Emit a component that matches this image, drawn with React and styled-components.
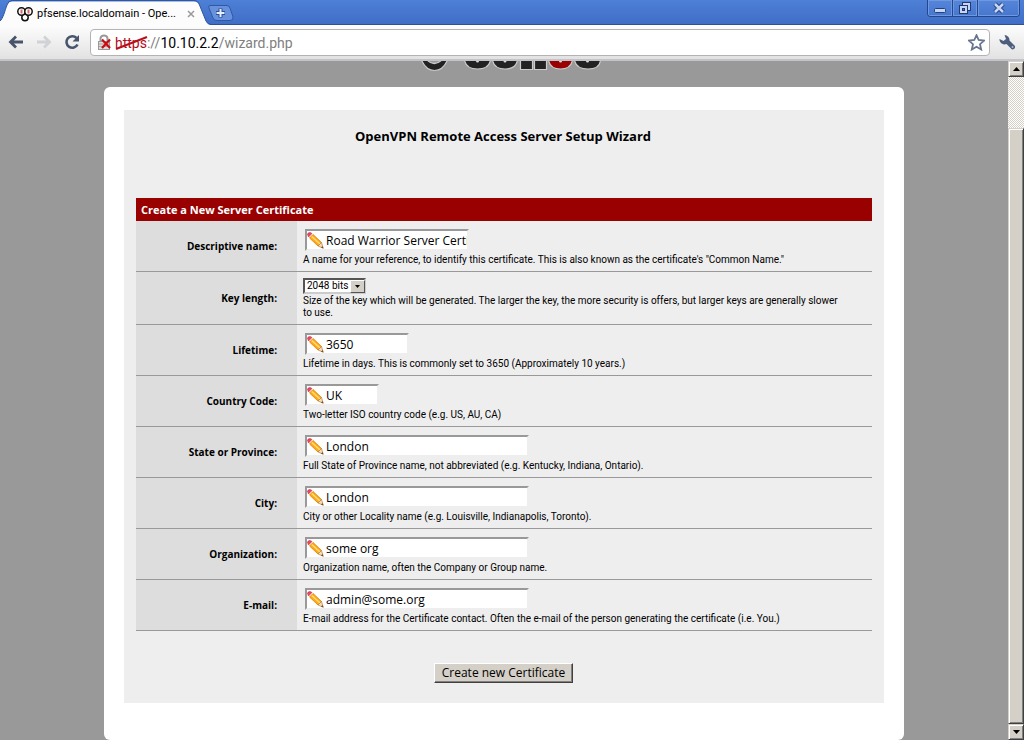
import React from "react";
import styled, { createGlobalStyle } from "styled-components";

const GlobalStyle = createGlobalStyle`
  * { box-sizing: border-box; }
  html, body, #root { height: 100%; }
  body {
    margin: 0;
    overflow: hidden;
    background: #999999;
    color: #000000;
    font-family: "Open Sans", "Noto Sans", sans-serif;
    font-size: 10px;
  }
  button, input, select { font-family: inherit; color: inherit; }
`;

const Browser = styled.div`
  display: flex;
  flex-direction: column;
  height: 100vh;
`;

const TabStrip = styled.header`
  display: flex;
  align-items: flex-start;
  height: 25px;
  background: linear-gradient(#4d80d6, #406ec6);
  border-bottom: 1px solid #2c4f96;
`;

const Tab = styled.div`
  position: relative;
  display: flex;
  align-items: center;
  gap: 4px;
  width: 212px;
  height: 25px;
  padding: 2px 17px 0 17px;
`;

const TabShape = styled.svg`
  position: absolute;
  left: 0;
  top: 0;
`;

const Favicon = styled.svg`
  position: relative;
  flex: none;
`;

const TabTitle = styled.span`
  position: relative;
  flex: 1;
  font-family: Roboto, sans-serif;
  font-size: 11px;
  line-height: 16px;
  white-space: nowrap;
`;

const PlainButton = styled.button`
  position: relative;
  display: flex;
  align-items: center;
  justify-content: center;
  flex: none;
  padding: 0;
  border: 0;
  background: none;
`;

const NewTab = styled(PlainButton)`
  margin: 5px 0 0 -4px;
`;

const WindowControls = styled.div`
  display: flex;
  height: 17px;
  margin: 0 4px 0 auto;
  border: 1px solid #24468c;
  border-top: 0;
  border-radius: 0 0 4px 4px;
  overflow: hidden;
`;

const WindowButton = styled(PlainButton)`
  width: ${(p) => (p.$wide ? "41px" : "25px")};
  background: linear-gradient(#5586da, #4777cd);
  border-right: ${(p) => (p.$wide ? "0" : "1px solid #24468c")};
  box-shadow: inset 0 0 0 1px #6f98e0;
`;

const Toolbar = styled.nav`
  display: flex;
  align-items: center;
  flex: none;
  height: 36px;
  padding: 0 8px;
  background: linear-gradient(#fdfdfd, #e2e2e2);
  border-bottom: 2px solid #c3c3cc;
`;

const NavButtons = styled.div`
  display: flex;
  gap: 12px;
  margin-right: 10px;
`;

const Omnibox = styled.div`
  display: flex;
  align-items: center;
  flex: 1;
  height: 27px;
  margin-right: 9px;
  padding: 0 4px 0 6px;
  background: #ffffff;
  border: 1px solid #b3b3b3;
  border-radius: 4px;
`;

const Address = styled.a`
  position: relative;
  flex: 1;
  margin-left: 3px;
  padding-top: 2px;
  font-family: Roboto, sans-serif;
  font-size: 14px;
  line-height: 20px;
  color: #808080;
  text-decoration: none;
`;

const Scheme = styled.span`
  color: #b00c1c;
`;

const Host = styled.span`
  color: #000000;
`;

const Strike = styled.svg`
  position: absolute;
  left: 0;
  top: 4px;
`;

const Viewport = styled.div`
  display: flex;
  flex: 1;
  min-height: 0;
`;

const Page = styled.main`
  flex: 1;
  min-width: 0;
  padding: 0 16px;
  overflow: hidden;
`;

const Logo = styled.svg`
  display: block;
  margin: 0 auto 14px;
`;

const Card = styled.section`
  max-width: 800px;
  margin: 0 auto;
  padding: 23px 20px 37px;
  background: #ffffff;
  border-radius: 6px;
`;

const WizardForm = styled.form`
  padding: 16px 12px 20px;
  background: #eeeeee;
`;

const Title = styled.h1`
  margin: 0 0 52px;
  padding-right: 2px;
  font-size: 13px;
  line-height: 20px;
  font-weight: 700;
  text-align: center;
`;

const SectionTitle = styled.h2`
  margin: 0;
  padding: 0 5px;
  background: #990000;
  color: #ffffff;
  font-size: 11px;
  line-height: 23px;
  font-weight: 700;
`;

const FieldRow = styled.div`
  display: grid;
  grid-template-columns: 161px 1fr;
  border-bottom: 1px solid #999999;
`;

const FieldLabel = styled.label`
  display: flex;
  align-items: center;
  justify-content: flex-end;
  padding-right: 20px;
  background: #dddddd;
  font-weight: 700;
`;

const FieldBody = styled.div`
  padding: ${(p) => (p.$compact ? "6px" : "8px")} 24px 5px 6px;
`;

const TextBox = styled.div`
  position: relative;
  width: ${(p) => p.$width}px;
  height: 22px;
  margin: 0 0 2px 2px;
`;

const TextInput = styled.input`
  width: 100%;
  height: 100%;
  padding: 0 0 0 19px;
  background: #ffffff;
  border: 2px solid;
  border-color: #999999 #eeeeee #eeeeee #999999;
  border-radius: 0;
  font-size: 12px;
  outline: 0;
`;

const Pencil = styled.svg`
  position: absolute;
  left: 2px;
  top: 3px;
`;

const SelectBox = styled.div`
  position: relative;
  width: 63px;
  height: 16px;
`;

const SelectInput = styled.select`
  display: block;
  width: 100%;
  height: 16px;
  padding: 0 0 0 2px;
  appearance: none;
  background: #ffffff;
  border: 2px solid;
  border-color: #555555 #cccccc #cccccc #555555;
  border-radius: 0;
  font-family: Roboto, sans-serif;
  font-size: 10px;
  line-height: 12px;
  outline: 0;
`;

const SelectArrow = styled.span`
  position: absolute;
  right: 1px;
  top: 2px;
  display: flex;
  align-items: center;
  justify-content: center;
  width: 15px;
  height: 13px;
  background: #d4d0c8;
  border: 1px solid;
  border-color: #ffffff #555555 #555555 #ffffff;
  pointer-events: none;
`;

const Hint = styled.p`
  margin: 0;
  padding-top: 1px;
  font-family: Roboto, sans-serif;
  line-height: 12px;
`;

const Actions = styled.div`
  display: flex;
  justify-content: center;
  padding-top: 32px;
`;

const Submit = styled.button`
  height: 20px;
  padding: 0 7px;
  margin-right: 1px;
  background: #d4d0c8;
  border: 1px solid;
  border-color: #ffffff #404040 #404040 #ffffff;
  border-radius: 0;
  box-shadow: inset -1px -1px #808080;
  font-size: 12px;
  line-height: 16px;
`;

const Scrollbar = styled.div`
  display: flex;
  flex-direction: column;
  flex: none;
  width: 16px;
  background: repeating-conic-gradient(#d4d0c8 0 25%, #ffffff 0 50%) 0 0 / 2px 2px;
`;

const ScrollButton = styled(PlainButton)`
  height: 16px;
  background: #d4d0c8;
  border: 1px solid;
  border-color: #d4d0c8 #404040 #404040 #d4d0c8;
  box-shadow: inset 1px 1px #ffffff, inset -1px -1px #808080;
`;

const Thumb = styled.div`
  flex: 1;
  margin-top: 51px;
  background: #d4d0c8;
  border: 1px solid;
  border-color: #d4d0c8 #404040 #404040 #d4d0c8;
  box-shadow: inset 1px 1px #ffffff, inset -1px -1px #808080;
`;

const FIELDS = [
  { id: "name", label: "Descriptive name:", value: "Road Warrior Server Certificate", width: 164,
    hint: 'A name for your reference, to identify this certificate. This is also known as the certificate\'s "Common Name."' },
  { id: "keylength", label: "Key length:", options: ["2048 bits", "1024 bits", "4096 bits"],
    hint: "Size of the key which will be generated. The larger the key, the more security is offers, but larger keys are generally slower to use." },
  { id: "lifetime", label: "Lifetime:", value: "3650", width: 104,
    hint: "Lifetime in days. This is commonly set to 3650 (Approximately 10 years.)" },
  { id: "country", label: "Country Code:", value: "UK", width: 74,
    hint: "Two-letter ISO country code (e.g. US, AU, CA)" },
  { id: "state", label: "State or Province:", value: "London", width: 224,
    hint: "Full State of Province name, not abbreviated (e.g. Kentucky, Indiana, Ontario)." },
  { id: "city", label: "City:", value: "London", width: 224,
    hint: "City or other Locality name (e.g. Louisville, Indianapolis, Toronto)." },
  { id: "organization", label: "Organization:", value: "some org", width: 224,
    hint: "Organization name, often the Company or Group name." },
  { id: "email", label: "E-mail:", value: "admin@some.org", width: 224,
    hint: "E-mail address for the Certificate contact. Often the e-mail of the person generating the certificate (i.e. You.)" },
];

function PencilIcon() {
  return (
    <Pencil width="17" height="17" viewBox="0 0 17 17" aria-hidden="true">
      <path d="M2.500 6 6 2.500 14.500 10.500 11 14Z" fill="#ffa81a" stroke="#d98200" strokeWidth="0.8" />
      <path d="M4.800 4.500 13 12" stroke="#ffdc70" strokeWidth="1.600" />
      <path d="M0.500 2.500Q0.500 0.500 3 0.500L5 1.500 1.500 5Z" fill="#e8486c" stroke="#c42c3a" strokeWidth="0.6" />
      <path d="M14.500 10.500 16.200 16.200 11 14Z" fill="#f7dfba" stroke="#b87a40" strokeWidth="0.7" />
      <path d="M15.500 14 16.500 16.500 14 15.500Z" fill="#704828" />
    </Pencil>
  );
}

function Field({ field }) {
  return (
    <FieldRow>
      <FieldLabel htmlFor={field.id}>{field.label}</FieldLabel>
      <FieldBody $compact={Boolean(field.options)}>
        {field.options ? (
          <SelectBox>
            <SelectInput id={field.id}>
              {field.options.map((o) => <option key={o}>{o}</option>)}
            </SelectInput>
            <SelectArrow>
              <svg width="5" height="3"><path d="M0 0H5L2.500 3Z" /></svg>
            </SelectArrow>
          </SelectBox>
        ) : (
          <TextBox $width={field.width}>
            <TextInput id={field.id} type="text" defaultValue={field.value} />
            <PencilIcon />
          </TextBox>
        )}
        <Hint>{field.hint}</Hint>
      </FieldBody>
    </FieldRow>
  );
}

function BrowserTabs() {
  return (
    <TabStrip>
      <Tab>
        <TabShape width="214" height="25" aria-hidden="true">
          <path d="M0 25V21C3 19 5 10 7 5Q8.500 1.500 12 1.500H194Q198 1.500 199.500 5L206 21Q207.500 24.500 211 25Z" fill="#fcfcfc" />
          <path d="M0 21C3 19 5 10 7 5Q8.500 0.500 12 0.500H194Q198 0.500 199.500 5L206 21Q207.500 24.500 211 24.500" fill="none" stroke="#2f569f" />
        </TabShape>
        <Favicon width="16" height="16" aria-hidden="true">
          <g fill="#fff" stroke="#111" strokeWidth="1.500">
            <circle cx="8" cy="11.500" r="3.200" />
            <circle cx="4.500" cy="5.500" r="3.700" />
            <circle cx="11.500" cy="5.500" r="3.700" />
          </g>
          <path d="M4.500 3.500V7.500M11.500 3.500V7.500" stroke="#d66" strokeWidth="2" />
        </Favicon>
        <TabTitle>pfsense.localdomain - Ope...</TabTitle>
        <PlainButton aria-label="Close tab">
          <svg width="8" height="8"><path d="M1 1 7 7M7 1 1 7" stroke="#9a9a9a" strokeWidth="1.500" /></svg>
        </PlainButton>
      </Tab>
      <NewTab aria-label="New tab">
        <svg width="26" height="16">
          <path d="M2 0.500H19Q21 0.500 22 3L25 12Q25.500 15.500 22 15.500H9Q6 15.500 5 13L1 3Q0 0.500 2 0.500Z" fill="#6791dc" stroke="#3158a4" />
          <path d="M12.500 3.500V12.500M8 8H17" stroke="#2b4d92" strokeWidth="4" />
          <path d="M12.500 4V12M8.500 8H16.500" stroke="#e6eefb" strokeWidth="2" />
        </svg>
      </NewTab>
      <WindowControls>
        <WindowButton aria-label="Minimize">
          <svg width="12" height="16"><rect x="0.500" y="8.500" width="11" height="4" rx="1" fill="#c5d5f3" stroke="#24407c" /></svg>
        </WindowButton>
        <WindowButton aria-label="Restore">
          <svg width="14" height="16">
            <g stroke="#203a73" fill="#c5d5f3">
              <rect x="4.500" y="2.500" width="8" height="8" />
              <rect x="1.500" y="5.500" width="8" height="8" />
              <rect x="4.500" y="8.500" width="2" height="2" fill="#4777cd" />
            </g>
          </svg>
        </WindowButton>
        <WindowButton $wide aria-label="Close window">
          <svg width="12" height="16">
            <path d="M2 4 10 12M10 4 2 12" stroke="#203a73" strokeWidth="4.500" />
            <path d="M2 4 10 12M10 4 2 12" stroke="#c5d5f3" strokeWidth="2.500" />
          </svg>
        </WindowButton>
      </WindowControls>
    </TabStrip>
  );
}

function AddressBar() {
  return (
    <Toolbar>
      <NavButtons>
        <PlainButton aria-label="Back">
          <svg width="16" height="16"><path d="M15 8H3M8 2.500 2.500 8 8 13.500" fill="none" stroke="#47546b" strokeWidth="2.800" /></svg>
        </PlainButton>
        <PlainButton aria-label="Forward">
          <svg width="16" height="16"><path d="M1 8H13M8 2.500 13.500 8 8 13.500" fill="none" stroke="#d0d2d6" strokeWidth="2.800" /></svg>
        </PlainButton>
        <PlainButton aria-label="Reload">
          <svg width="16" height="16">
            <path d="M12.500 4A5.800 5.800 0 1 0 13.500 10.500" fill="none" stroke="#47546b" strokeWidth="2.600" />
            <path d="M15 1V7.500H8.500Z" fill="#47546b" />
          </svg>
        </PlainButton>
      </NavButtons>
      <Omnibox>
        <svg width="15" height="17" aria-hidden="true">
          <path d="M3.500 8V4.500A3.500 3 0 0 1 10.500 4.500V8" fill="none" stroke="#999" strokeWidth="2" />
          <rect x="1.500" y="7.500" width="11" height="8" fill="#dcdcdc" stroke="#999" />
          <path d="M2 10H12M2 12.500H12" stroke="#aaa" />
          <path d="M5 5.500 13 14M13 5.500 5 14" stroke="#cc0a12" strokeWidth="2.200" />
        </svg>
        <Address href="https://10.10.2.2/wizard.php">
          <Scheme>https</Scheme>://<Host>10.10.2.2</Host>/wizard.php
          <Strike width="34" height="16"><path d="M1 14 32 2" stroke="#b8101c" strokeWidth="2" /></Strike>
        </Address>
        <PlainButton aria-label="Bookmark this page">
          <svg width="17" height="17"><path d="M8.500 1.200 10.700 6 16 6.600 12 10.200 13.200 15.500 8.500 12.800 3.800 15.500 5 10.200 1 6.600 6.300 6Z" fill="#fff" stroke="#68758f" strokeWidth="1.800" /></svg>
        </PlainButton>
      </Omnibox>
      <PlainButton aria-label="Settings">
        <svg width="17" height="17">
          <path d="M5.500 1A5 5 0 0 1 10.500 6.500L16 12Q16.500 15.500 13 15.500L7.500 10A5 5 0 0 1 0.500 5L4.500 7 7 5Z" fill="#4c5e7e" />
          <circle cx="13.500" cy="13" r="1" fill="#aeb8ca" />
        </svg>
      </PlainButton>
    </Toolbar>
  );
}

function SiteLogo() {
  return (
    <Logo width="194" height="12" viewBox="407 61 194 12" role="img" aria-label="pfSense">
      <g fill="#222222" stroke="#cccccc" strokeWidth="1.200">
        <path d="M421.500 60Q426 70.500 434.500 70.500T447.500 60H442Q434 67 427 60Z" />
        <path d="M464.500 60Q466 69 477.500 69T490.500 60Z" />
        <path d="M492.500 60Q494 69 505 69T517.500 60Z" />
        <path d="M520.500 60H532.500V69.500H520.500Z" />
        <path d="M534.500 60H546.500V69.500H534.500Z" />
        <path d="M548.500 60Q550 69 560.500 69T572.500 60Z" fill="#990000" />
        <path d="M574.500 60Q576 69 588 69T600.500 60Z" />
      </g>
      <g fill="#dddddd">
        <circle cx="477.500" cy="61" r="1.500" />
        <circle cx="505" cy="61" r="1.500" />
        <circle cx="560.500" cy="61" r="1.500" />
        <circle cx="587.500" cy="61" r="1.500" />
      </g>
    </Logo>
  );
}

export default function App() {
  return (
    <Browser>
      <GlobalStyle />
      <BrowserTabs />
      <AddressBar />
      <Viewport>
        <Page>
          <SiteLogo />
          <Card>
            <WizardForm onSubmit={(e) => e.preventDefault()}>
              <Title>OpenVPN Remote Access Server Setup Wizard</Title>
              <SectionTitle>Create a New Server Certificate</SectionTitle>
              {FIELDS.map((f) => <Field key={f.id} field={f} />)}
              <Actions>
                <Submit type="submit">Create new Certificate</Submit>
              </Actions>
            </WizardForm>
          </Card>
        </Page>
        <Scrollbar>
          <ScrollButton aria-label="Scroll up"><svg width="7" height="4"><path d="M0 4H7L3.500 0Z" /></svg></ScrollButton>
          <Thumb />
          <ScrollButton aria-label="Scroll down"><svg width="7" height="4"><path d="M0 0H7L3.500 4Z" /></svg></ScrollButton>
        </Scrollbar>
      </Viewport>
    </Browser>
  );
}
